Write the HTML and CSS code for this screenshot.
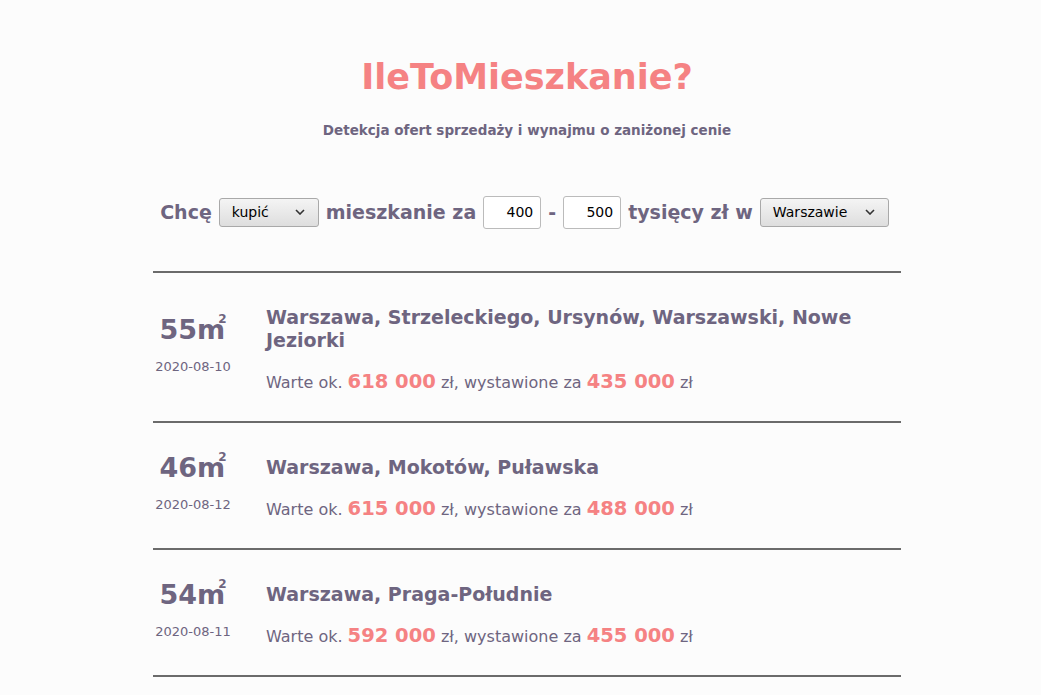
FILE: index.html
```html
<!DOCTYPE html>
<html lang="pl">
<head>
<meta charset="utf-8">
<title>IleToMieszkanie?</title>
<link rel="stylesheet" href="styles.css">
</head>
<body>
<div class="page">
  <h1 class="title">IleToMieszkanie?</h1>
  <p class="subtitle">Detekcja ofert sprzedaży i wynajmu o zaniżonej cenie</p>

  <form class="filters">
    <span class="label">Chcę</span>
    <span class="select select-mode"><span class="select-text">kupić</span><svg class="chev" width="10" height="6" viewBox="0 0 10 6"><path d="M1 1 L5 5 L9 1" fill="none" stroke="#333" stroke-width="1.6"/></svg></span>
    <span class="label">mieszkanie za</span>
    <span class="input">400</span>
    <span class="label">-</span>
    <span class="input">500</span>
    <span class="label">tysięcy zł w</span>
    <span class="select select-city"><span class="select-text">Warszawie</span><svg class="chev" width="10" height="6" viewBox="0 0 10 6"><path d="M1 1 L5 5 L9 1" fill="none" stroke="#333" stroke-width="1.6"/></svg></span>
  </form>

  <ul class="offers">
    <li class="offer">
      <div class="meta">
        <div class="area">55m<sup>2</sup></div>
        <div class="date">2020-08-10</div>
      </div>
      <div class="info">
        <h2 class="address">Warszawa, Strzeleckiego, Ursynów, Warszawski, Nowe Jeziorki</h2>
        <p class="price">Warte ok. <b>618 000</b> zł, wystawione za <b>435 000</b> zł</p>
      </div>
    </li>
    <li class="offer">
      <div class="meta">
        <div class="area">46m<sup>2</sup></div>
        <div class="date">2020-08-12</div>
      </div>
      <div class="info">
        <h2 class="address">Warszawa, Mokotów, Puławska</h2>
        <p class="price">Warte ok. <b>615 000</b> zł, wystawione za <b>488 000</b> zł</p>
      </div>
    </li>
    <li class="offer">
      <div class="meta">
        <div class="area">54m<sup>2</sup></div>
        <div class="date">2020-08-11</div>
      </div>
      <div class="info">
        <h2 class="address">Warszawa, Praga-Południe</h2>
        <p class="price">Warte ok. <b>592 000</b> zł, wystawione za <b>455 000</b> zł</p>
      </div>
    </li>
  </ul>
</div>
</body>
</html>
```

FILE: styles.css
```css
html, body {
  margin: 0;
  padding: 0;
}
body {
  background: #fcfcfc;
  color: #6e6580;
  font-family: "DejaVu Sans", Verdana, sans-serif;
  padding-left: 13px;
}
.page {
  width: 748px;
  margin: 0 auto;
}
.title {
  margin: 57px 0 0;
  text-align: center;
  font-size: 35px;
  line-height: 41px;
  font-weight: bold;
  color: #f58283;
}
.subtitle {
  margin: 24px 0 0;
  text-align: center;
  font-size: 13.5px;
  line-height: 17px;
  font-weight: bold;
}
.filters {
  margin: 56px 0 0;
  padding-right: 5px;
  height: 34px;
  display: flex;
  justify-content: center;
  align-items: center;
  gap: 7px;
}
.label {
  font-size: 19px;
  font-weight: bold;
}
.select {
  box-sizing: border-box;
  height: 29px;
  display: inline-flex;
  align-items: center;
  justify-content: space-between;
  padding: 0 13px 0 12px;
  border: 1px solid #a9a9a9;
  border-radius: 3px;
  background: linear-gradient(#f4f4f4, #dedede);
  color: #000;
  font-size: 14px;
  font-family: "DejaVu Sans", sans-serif;
}
.select-mode { width: 100px; }
.select-city { width: 129px; }
.input {
  box-sizing: border-box;
  width: 58px;
  height: 33px;
  display: inline-flex;
  align-items: center;
  justify-content: flex-end;
  padding-right: 7px;
  border: 1px solid #bbb;
  border-radius: 3px;
  background: #fff;
  color: #000;
  font-size: 14px;
}
.offers {
  list-style: none;
  margin: 42px 0 0;
  padding: 0;
  border-top: 2px solid #6b6b6b;
}
.offer {
  display: flex;
  align-items: center;
  padding: 33px 0 26px;
  border-bottom: 2px solid #6b6b6b;
}
.meta {
  width: 80px;
  margin: -12px 33px 0 0;
  text-align: center;
  flex-shrink: 0;
}
.area {
  font-size: 27px;
  line-height: 30px;
  font-weight: bold;
}
.area sup {
  font-size: 12px;
  line-height: 0;
  vertical-align: 16px;
  margin-left: -7px;
}
.date {
  margin-top: 14px;
  font-size: 13px;
  line-height: 16px;
}
.info {
  flex: 1;
}
.address {
  margin: 0;
  font-size: 19px;
  line-height: 23px;
  font-weight: bold;
}
.price {
  margin: 18px 0 0;
  font-size: 16px;
  line-height: 24px;
}
.price b {
  font-size: 19.5px;
  color: #f58283;
}
```
